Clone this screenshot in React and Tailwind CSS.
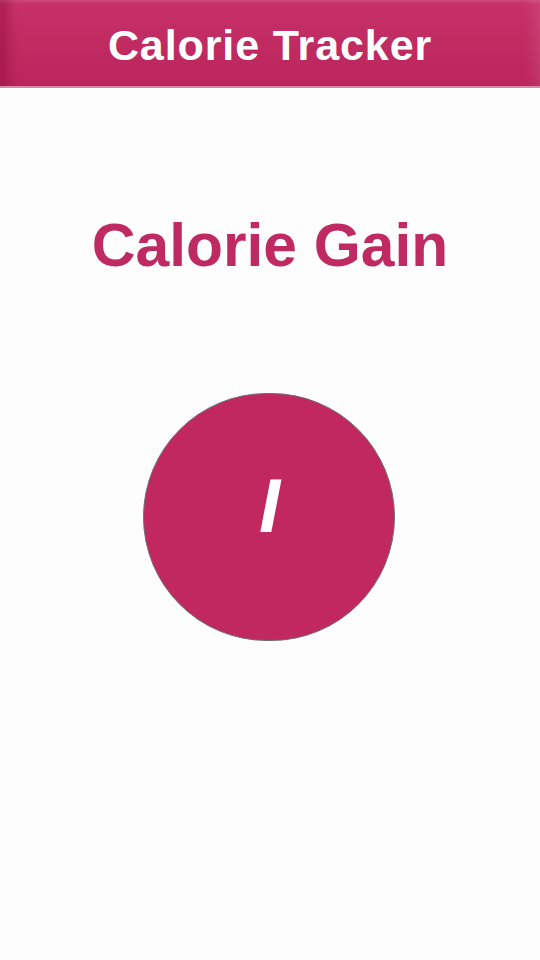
import React from "react";

const App = () => {
  return (
    <div
      className="w-[540px] h-[960px] bg-[#fdfdfd] flex flex-col"
      style={{ fontFamily: '"Liberation Sans", Arial, sans-serif' }}
    >
      {/* Header bar */}
      <header className="h-[88px] bg-gradient-to-b from-[#c8316a] via-[#c02b62] to-[#bc255d] border-b-2 border-[#d98aa8] shadow-[inset_16px_0_12px_-8px_rgba(120,0,40,0.35),inset_-16px_0_12px_-8px_rgba(255,255,255,0.08),inset_0_3px_4px_-2px_rgba(255,255,255,0.2)] flex items-center justify-center">
        <h1 className="text-white font-bold text-[43px] leading-none mt-[4px] tracking-[0.9px]">
          Calorie Tracker
        </h1>
      </header>

      {/* Title */}
      <h2 className="mt-[127px] text-center text-[#bf2a62] font-bold text-[60.5px] leading-none">
        Calorie Gain
      </h2>

      {/* Circle */}
      <div className="mt-[117px] flex justify-center">
        <div className="w-[252px] h-[248px] -ml-[3px] rounded-full bg-[#c1285f] border-[1.5px] border-[#6f6f6f] flex items-center justify-center">
          <span className="text-white font-bold italic text-[76px] leading-none ml-[2px] -mt-[22px]">
            I
          </span>
        </div>
      </div>
    </div>
  );
};

export default App;
